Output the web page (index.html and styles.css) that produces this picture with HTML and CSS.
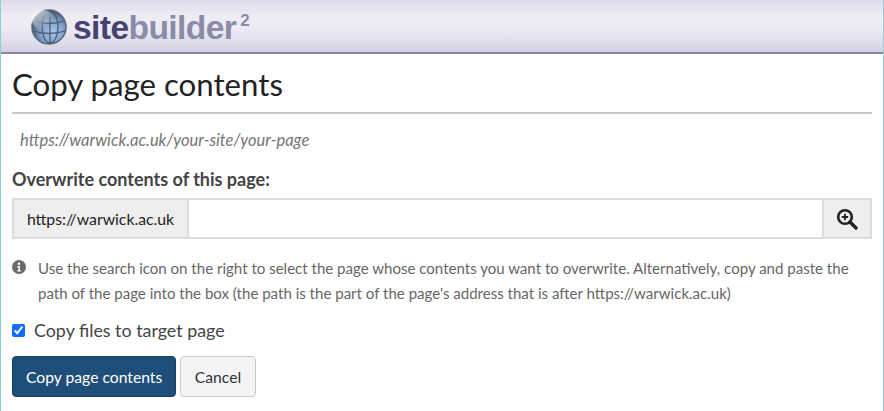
FILE: index.html
```html
<!DOCTYPE html>
<html lang="en">
<head>
<meta charset="utf-8">
<title>Copy page contents</title>
<link rel="stylesheet" href="styles.css">
</head>
<body>
<div class="frame">
  <header class="banner">
    <svg class="globe" width="36" height="36" viewBox="0 0 36 36" aria-hidden="true">
      <defs>
        <radialGradient id="g" cx="0.6" cy="0.65" r="0.65">
          <stop offset="0" stop-color="#a9c6ee"/>
          <stop offset="0.55" stop-color="#7f9fc8"/>
          <stop offset="1" stop-color="#3d5068"/>
        </radialGradient>
        <linearGradient id="s" x1="0" y1="0" x2="0.7" y2="0.8">
          <stop offset="0" stop-color="#fff" stop-opacity=".9"/>
          <stop offset="1" stop-color="#fff" stop-opacity="0"/>
        </linearGradient>
      </defs>
      <circle cx="18" cy="18" r="17" fill="url(#g)" stroke="#56677a" stroke-width="1.5"/>
      <g fill="none" stroke="#4a5d74" stroke-width="1.3">
        <ellipse cx="19" cy="18" rx="8" ry="16"/>
        <path d="M3 12q15 5 30 0M2 22q16 5 32 0M19 2v32"/>
      </g>
      <ellipse cx="12" cy="11" rx="11" ry="10" fill="url(#s)"/>
    </svg>
    <div class="wordmark"><span class="site">site</span><span class="builder">builder</span><sup class="two">2</sup></div>
  </header>
  <main class="content">
    <h1 class="title">Copy page contents</h1>
    <p class="crumb">https://warwick.ac.uk/your-site/your-page</p>
    <label class="field-label">Overwrite contents of this page:</label>
    <div class="input-group">
      <span class="addon">https://warwick.ac.uk</span>
      <input class="path" type="text">
      <span class="search">
        <svg width="22" height="22" viewBox="0 0 22 22" aria-hidden="true">
          <circle cx="9" cy="9" r="6.8" fill="none" stroke="#222" stroke-width="2.6"/>
          <path d="M5.8 9h6.4M9 5.8v6.4" stroke="#222" stroke-width="1.8"/>
          <path d="M14 14l6 6" stroke="#222" stroke-width="3.4" stroke-linecap="round"/>
        </svg>
      </span>
    </div>
    <div class="help">
      <svg class="info" width="14" height="14" viewBox="0 0 14 14" aria-hidden="true">
        <circle cx="7" cy="7" r="7" fill="#6a6a6a"/>
        <circle cx="7" cy="3.7" r="1.3" fill="#fff"/>
        <path d="M5.3 6h2.6v4.2h1v1.2H5.3v-1.2h1V7.2h-1z" fill="#fff"/>
      </svg>
      <p class="help-text">Use the search icon on the right to select the page whose contents you want to overwrite. Alternatively, copy and paste the path of the page into the box (the path is the part of the page's address that is after https://warwick.ac.uk)</p>
    </div>
    <label class="check"><input type="checkbox" checked> Copy files to target page</label>
    <div class="actions">
      <button class="btn primary" type="button">Copy page contents</button>
      <button class="btn" type="button">Cancel</button>
    </div>
  </main>
</div>
</body>
</html>
```
FILE: styles.css
```css
* { box-sizing: border-box; }
html, body { margin: 0; padding: 0; height: 100%; overflow: hidden; background: #fff; }
body { font-family: Lato, "Liberation Sans", sans-serif; color: #333; }
.frame { height: 411px; border-left: 1px solid #8fcfd0; border-right: 1px solid #8fcfd0; }
.banner {
  height: 54px; display: flex; align-items: center; padding: 1px 0 0 30px;
  background: linear-gradient(#dcdbea 0, #eeedf4 30%, #ecebf3 55%, #d3d2e3 100%);
  border-bottom: 2px solid #8c87a8;
}
.globe { flex: none; }
.wordmark { margin-left: 6px; padding-top: 2px; font: bold 33.6px/1 "Liberation Sans", Arial, sans-serif; letter-spacing: -0.6px; display: flex; }
.site { color: #45436f; }
.builder { color: #8b8ba8; }
.two { font-size: 17px; font-weight: 700; letter-spacing: 0; line-height: 1; margin: 1px 0 0 4px; color: #8b8ba8; }
.content { padding: 0 11px; }
.title {
  margin: 0; height: 60px; padding-top: 12px; font-size: 31.2px; line-height: 36px; font-weight: 400; color: #222;
  border-bottom: 2px solid #c8c8c8;
}
.crumb { margin: 14px 0 0 8px; font-size: 16.5px; line-height: 24px; font-style: italic; color: #767676; }
.field-label { display: block; margin-top: 15px; font-size: 18px; line-height: 24px; font-weight: 700; color: #444; }
.input-group { display: flex; height: 41px; margin-top: 7px; border: 2px solid #ddd; }
.addon { width: 175px; flex: none; display: flex; align-items: center; justify-content: center; font-size: 15.8px; color: #222; background: #eee; border-right: 2px solid #ddd; }
.path { flex: 1; min-width: 0; border: 0; outline: 0; background: #fff; }
.search { width: 48px; flex: none; display: flex; align-items: center; justify-content: center; background: #eee; border-left: 2px solid #ddd; }
.help { display: flex; gap: 12px; margin-top: 17px; }
.info { flex: none; margin: 4px 0 0 0; }
.help-text { margin: 0; font-size: 15.05px; line-height: 25px; color: #666; }
.check { display: flex; align-items: center; gap: 9px; margin-top: 12px; height: 24px; font-size: 17.85px; color: #444; }
.check input { margin: 0; width: 13px; height: 13px; accent-color: #0d6efd; }
.actions { display: flex; gap: 4px; margin-top: 14px; }
.btn { height: 41px; padding: 0 13.5px; font: 15.7px Lato, sans-serif; color: #333; background: #f4f4f4; border: 1px solid #ccc; border-radius: 4px; }
.primary { padding: 0 13px; color: #fff; background: #1f4e79; border-color: #1a4268; }
```
